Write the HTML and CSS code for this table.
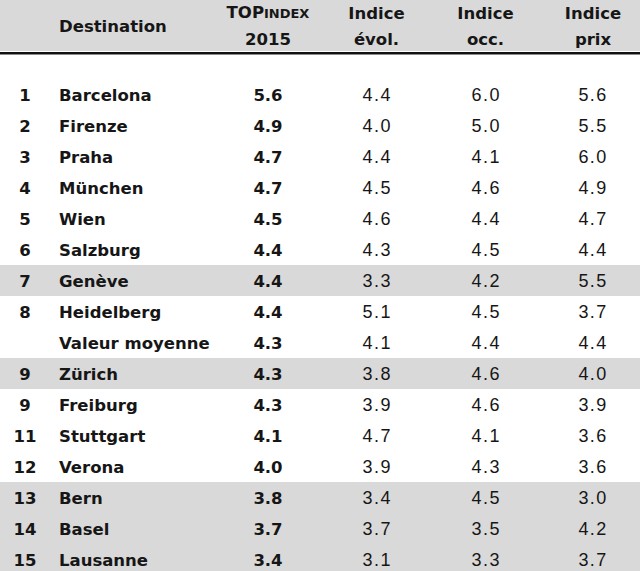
FILE: index.html
```html
<!DOCTYPE html>
<html lang="fr">
<head>
<meta charset="utf-8">
<title>Topindex 2015</title>
<link rel="stylesheet" href="styles.css">
</head>
<body>
<div class="table">
  <div class="thead">
    <div class="h rank"></div>
    <div class="h dest">Destination</div>
    <div class="h top">TOP<span class="sc">INDEX</span><br>2015</div>
    <div class="h val">Indice<br>évol.</div>
    <div class="h val">Indice<br>occ.</div>
    <div class="h val last">Indice<br>prix</div>
  </div>
  <div class="rule"></div>
  <div class="tbody">
    <div class="row"><div class="rank">1</div><div class="dest">Barcelona</div><div class="top">5.6</div><div class="val">4.4</div><div class="val">6.0</div><div class="val last">5.6</div></div>
    <div class="row"><div class="rank">2</div><div class="dest">Firenze</div><div class="top">4.9</div><div class="val">4.0</div><div class="val">5.0</div><div class="val last">5.5</div></div>
    <div class="row"><div class="rank">3</div><div class="dest">Praha</div><div class="top">4.7</div><div class="val">4.4</div><div class="val">4.1</div><div class="val last">6.0</div></div>
    <div class="row"><div class="rank">4</div><div class="dest">München</div><div class="top">4.7</div><div class="val">4.5</div><div class="val">4.6</div><div class="val last">4.9</div></div>
    <div class="row"><div class="rank">5</div><div class="dest">Wien</div><div class="top">4.5</div><div class="val">4.6</div><div class="val">4.4</div><div class="val last">4.7</div></div>
    <div class="row"><div class="rank">6</div><div class="dest">Salzburg</div><div class="top">4.4</div><div class="val">4.3</div><div class="val">4.5</div><div class="val last">4.4</div></div>
    <div class="row shade"><div class="rank">7</div><div class="dest">Genève</div><div class="top">4.4</div><div class="val">3.3</div><div class="val">4.2</div><div class="val last">5.5</div></div>
    <div class="row"><div class="rank">8</div><div class="dest">Heidelberg</div><div class="top">4.4</div><div class="val">5.1</div><div class="val">4.5</div><div class="val last">3.7</div></div>
    <div class="row"><div class="rank"></div><div class="dest">Valeur moyenne</div><div class="top">4.3</div><div class="val">4.1</div><div class="val">4.4</div><div class="val last">4.4</div></div>
    <div class="row shade"><div class="rank">9</div><div class="dest">Zürich</div><div class="top">4.3</div><div class="val">3.8</div><div class="val">4.6</div><div class="val last">4.0</div></div>
    <div class="row"><div class="rank">9</div><div class="dest">Freiburg</div><div class="top">4.3</div><div class="val">3.9</div><div class="val">4.6</div><div class="val last">3.9</div></div>
    <div class="row"><div class="rank">11</div><div class="dest">Stuttgart</div><div class="top">4.1</div><div class="val">4.7</div><div class="val">4.1</div><div class="val last">3.6</div></div>
    <div class="row"><div class="rank">12</div><div class="dest">Verona</div><div class="top">4.0</div><div class="val">3.9</div><div class="val">4.3</div><div class="val last">3.6</div></div>
    <div class="row shade"><div class="rank">13</div><div class="dest">Bern</div><div class="top">3.8</div><div class="val">3.4</div><div class="val">4.5</div><div class="val last">3.0</div></div>
    <div class="row shade"><div class="rank">14</div><div class="dest">Basel</div><div class="top">3.7</div><div class="val">3.7</div><div class="val">3.5</div><div class="val last">4.2</div></div>
    <div class="row shade"><div class="rank">15</div><div class="dest">Lausanne</div><div class="top">3.4</div><div class="val">3.1</div><div class="val">3.3</div><div class="val last">3.7</div></div>
  </div>
</div>
</body>
</html>
```

FILE: styles.css
```css
html, body {
  margin: 0;
  padding: 0;
  background: #ffffff;
  overflow: hidden;
}

.table {
  width: 640px;
  color: #161616;
  font-family: "DejaVu Sans", "Liberation Sans", sans-serif;
}

.thead,
.row {
  display: grid;
  grid-template-columns: 50px 164px 108px 109px 109px 100px;
  align-items: center;
}

.thead {
  height: 51px;
  box-sizing: border-box;
  padding-bottom: 1px;
  background: #d9d9d9;
  font-weight: bold;
  font-size: 16.5px;
  line-height: 26px;
}

.sc {
  font-size: 13px;
}

.rule {
  height: 2px;
  margin-top: 1px;
  border-bottom: 1px solid #8a8a8a;
  background: #111111;
  margin-bottom: 24px;
}

.row {
  height: 31px;
  box-sizing: border-box;
  padding-top: 2px;
  line-height: 29px;
}

.row.shade {
  background: #d9d9d9;
}

.rank {
  text-align: center;
  font-weight: bold;
  font-size: 16.5px;
}

.dest {
  padding-left: 9px;
  font-weight: bold;
  font-size: 16.5px;
  white-space: nowrap;
}

.top {
  text-align: center;
  font-weight: bold;
  font-size: 16.5px;
}

.val {
  text-align: center;
  font-family: "Liberation Sans", Arial, sans-serif;
  font-size: 18px;
  letter-spacing: 1.4px;
  padding-left: 1.4px;
}

.thead .val {
  font-family: "DejaVu Sans", "Liberation Sans", sans-serif;
  font-size: 16.5px;
  letter-spacing: 0;
  padding-left: 0;
}

.val.last,
.thead .val.last {
  padding-left: 6px;
}
```
